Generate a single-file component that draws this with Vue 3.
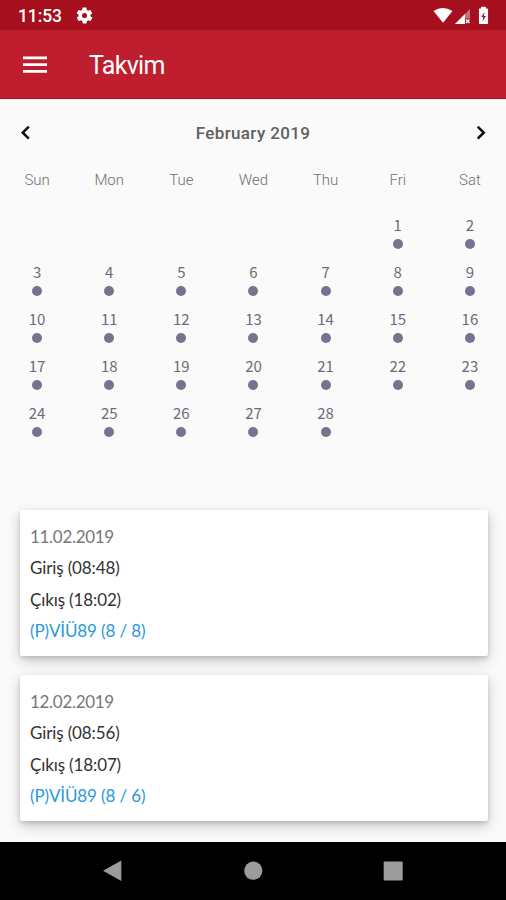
<script setup>
const weekdays = ['Sun', 'Mon', 'Tue', 'Wed', 'Thu', 'Fri', 'Sat']
const leading = 5
const cells = [...Array(leading).fill(null), ...Array.from({ length: 28 }, (_, i) => i + 1)]
const entries = [
  { date: '11.02.2019', start: 'Giriş (08:48)', end: 'Çıkış (18:02)', shift: '(P)VİÜ89 (8 / 8)' },
  { date: '12.02.2019', start: 'Giriş (08:56)', end: 'Çıkış (18:07)', shift: '(P)VİÜ89 (8 / 6)' },
]
</script>

<template>
  <div class="screen">
    <div class="status">
      <span class="clock">11:53</span>
      <svg class="gear" width="19" height="19" viewBox="0 0 24 24">
        <path d="M19.4 13c0-.3.1-.6.1-1s0-.7-.1-1l2.100-1.600c.2-.2.2-.4.100-.6l-2-3.500c-.1-.2-.4-.3-.6-.2l-2.500 1c-.5-.4-1.100-.7-1.700-1L14.500 2.400c0-.2-.2-.4-.5-.4h-4c-.3 0-.5.2-.5.4l-.4 2.700c-.6.300-1.200.6-1.700 1l-2.500-1c-.2-.1-.5 0-.6.2l-2 3.500c-.1.2-.1.500.1.6L4.600 11c0 .3-.1.600-.1 1s0 .7.100 1l-2.100 1.600c-.2.2-.3.4-.1.6l2 3.500c.1.2.4.3.6.2l2.500-1c.5.4 1.100.7 1.700 1l.4 2.700c0 .2.2.4.5.4h4c.3 0 .5-.2.5-.4l.4-2.700c.6-.3 1.200-.6 1.700-1l2.500 1c.2.1.5 0 .6-.2l2-3.500c.1-.2.1-.5-.1-.6zM12 15.200a3.200 3.200 0 1 1 0-6.400 3.200 3.200 0 0 1 0 6.400z" />
      </svg>
      <svg class="indicators" width="60" height="20" viewBox="0 0 60 20">
        <path d="M1.500 4.900Q10.500-1.100 20.500 4.900L11 16.700z" />
        <path d="M38 3v15H23z" opacity=".4" />
        <path d="M33 8V18H23z" />
        <rect x="33" y="12.500" width="5.500" height="6" class="cut" />
        <path d="M34 13.500l3.400 3.600M37.400 13.500L34 17.100" class="cross" />
        <path d="M47.700 3.200h2V1.600h3.600v1.600h2v14h-7.600z" stroke="#fff" stroke-linejoin="round" stroke-width="1.500" />
        <path d="M52.700 6l-3.400 5h2L50.500 15.500l3.400-5.500h-2z" class="bolt" />
      </svg>
    </div>
    <header class="bar">
      <svg class="menu" width="24" height="18" viewBox="0 0 24 18">
        <path d="M0 .5h24v2.800H0zM0 7.300h24v2.800H0zM0 14h24v2.800H0z" />
      </svg>
      <h1>Takvim</h1>
    </header>
    <main>
      <section class="calendar">
        <div class="month">
          <svg width="11" height="14" viewBox="0 0 11 14"><path d="M8.800.7L2.800 6.700l6 6" /></svg>
          <span>February 2019</span>
          <svg width="11" height="14" viewBox="0 0 11 14"><path d="M2.700.7l6 6-6 6" /></svg>
        </div>
        <div class="week">
          <span v-for="day in weekdays" :key="day">{{ day }}</span>
        </div>
        <div class="days">
          <div v-for="(day, i) in cells" :key="i" class="day">
            <template v-if="day">
              <span>{{ day }}</span>
              <i class="dot"></i>
            </template>
          </div>
        </div>
      </section>
      <section class="list">
        <article v-for="entry in entries" :key="entry.date" class="card">
          <p class="date">{{ entry.date }}</p>
          <p>{{ entry.start }}</p>
          <p>{{ entry.end }}</p>
          <p class="shift">{{ entry.shift }}</p>
        </article>
      </section>
    </main>
    <nav class="nav">
      <svg width="20" height="22" viewBox="0 0 20 22"><path d="M0 10.700L18.300.5v20.400z" /></svg>
      <svg width="20" height="20" viewBox="0 0 20 20"><circle cx="10.300" cy="9.700" r="9.100" /></svg>
      <svg width="20" height="20" viewBox="0 0 20 20"><rect x=".7" y=".5" width="19" height="19" rx="1" /></svg>
    </nav>
  </div>
</template>

<style>
body {
  margin: 0;
}
</style>

<style scoped>
.screen {
  width: 506px;
  height: 900px;
  display: flex;
  flex-direction: column;
  overflow: hidden;
  background: #fafafa;
  font-family: Roboto, sans-serif;
}
.status {
  flex: none;
  height: 30px;
  box-sizing: border-box;
  padding: 1px 14px 0 18px;
  display: flex;
  align-items: center;
  background: #a60f1d;
  color: #fff;
}
.status svg {
  fill: #fff;
}
.clock {
  width: 57px;
  font-size: 17.500px;
  font-weight: 500;
  letter-spacing: -0.100px;
}
.indicators {
  margin-left: auto;
}
.indicators .cut {
  fill: #a60f1d;
}
.indicators .cross {
  stroke: #fff;
  stroke-width: 1.500;
}
.indicators .bolt {
  fill: #a60f1d;
}
.bar {
  flex: none;
  height: 69px;
  box-sizing: border-box;
  padding: 2px 23px 0;
  display: flex;
  align-items: center;
  gap: 42px;
  background: #bf1e2e;
  border-bottom: 1px solid #b40e18;
  color: #fff;
}
.menu {
  fill: #fff;
}
h1 {
  margin: 2px 0 0;
  font-size: 25px;
  font-weight: 400;
  line-height: 30px;
  letter-spacing: -0.700px;
}
main {
  flex: 1;
  min-height: 0;
  overflow: hidden;
}
.calendar {
  height: 411px;
}
.month {
  height: 67px;
  padding: 0 20px;
  display: flex;
  align-items: center;
  justify-content: space-between;
  color: #606060;
  font-size: 17px;
  font-weight: 500;
  letter-spacing: 0.350px;
}
.month svg {
  fill: none;
  stroke: #111;
  stroke-width: 2.600;
}
.week,
.days {
  display: grid;
  grid-template-columns: repeat(7, 1fr);
  padding-left: 1px;
  text-align: center;
}
.week {
  height: 49px;
  line-height: 28px;
  font-size: 15px;
  font-weight: 300;
  color: #707070;
}
.days {
  grid-auto-rows: 47px;
}
.day {
  display: flex;
  flex-direction: column;
  align-items: center;
  font-family: "Noto Sans CJK SC", sans-serif;
  font-size: 15px;
  line-height: 20px;
  color: #6d6b77;
}
.dot {
  width: 10px;
  height: 10px;
  margin-top: 4px;
  border-radius: 50%;
  background: #77738f;
}
.list {
  padding: 0 18px 0 20px;
  display: flex;
  flex-direction: column;
  gap: 19px;
}
.card {
  height: 146px;
  box-sizing: border-box;
  padding: 11px 10px;
  border-radius: 2px;
  background: #fff;
  box-shadow: 0 5px 14px rgba(0, 0, 0, 0.2), 0 2px 4px rgba(0, 0, 0, 0.14);
  font-family: Lato, sans-serif;
  font-size: 17px;
  letter-spacing: -0.120px;
  color: #333;
}
.card p {
  margin: 0;
  line-height: 31.400px;
  white-space: nowrap;
}
.card .date {
  letter-spacing: -0.300px;
  color: #777;
}
.card .shift {
  color: #2b98dc;
}
.nav {
  flex: none;
  height: 58px;
  box-sizing: border-box;
  padding: 0 103px;
  display: flex;
  align-items: center;
  justify-content: space-between;
  background: #000;
}
.nav svg {
  fill: #9c9c9c;
}
</style>
